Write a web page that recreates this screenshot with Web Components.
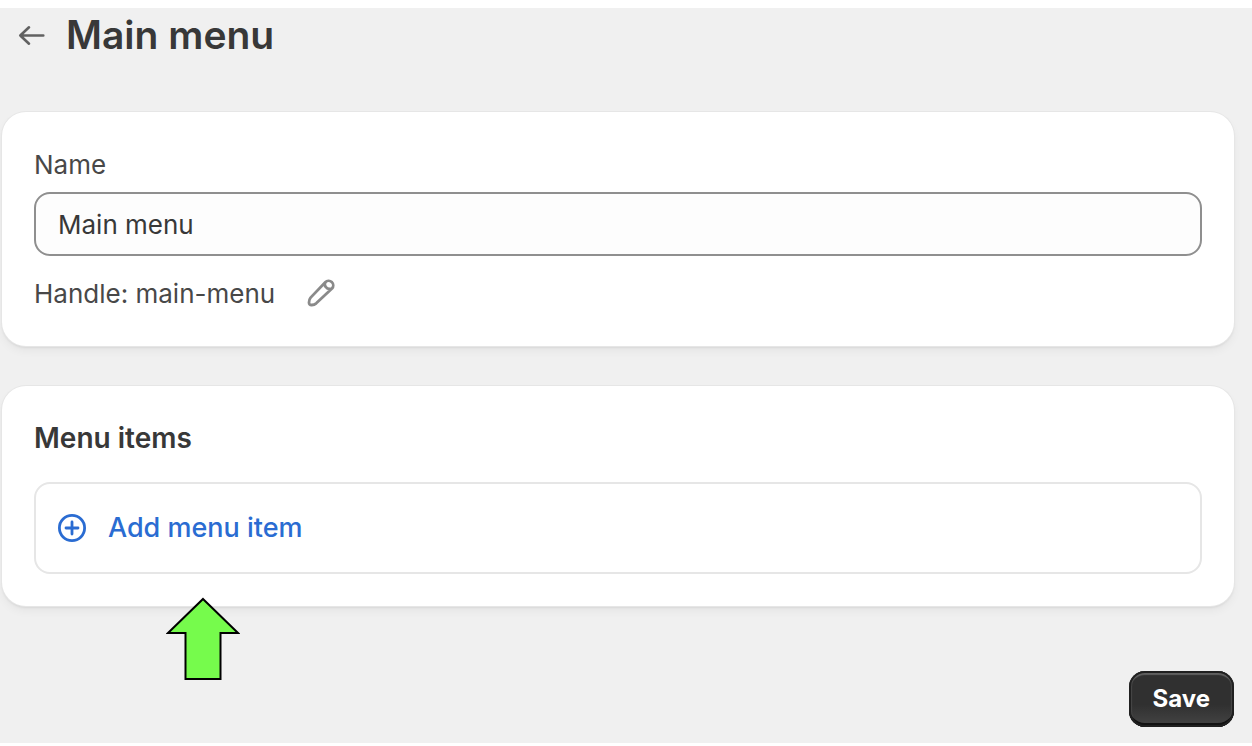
<!DOCTYPE html>
<html lang="en">
<head>
<meta charset="utf-8">
<title>Main menu</title>
<style>
  body { margin: 0; background: #fff; color: #303030; font: 26px/40px Inter, "Liberation Sans", sans-serif; }
</style>
</head>
<body>
<menu-page></menu-page>
<script>
const define = (name, html, delegatesFocus = false) => {
  const template = document.createElement('template');
  template.innerHTML = html;
  customElements.define(name, class extends HTMLElement {
    constructor() {
      super();
      this.attachShadow({ mode: 'open', delegatesFocus }).append(template.content.cloneNode(true));
    }
  });
};

define('page-header', `
  <style>
    :host { display: flex; align-items: center; gap: 18px; padding: 0 16px; }
    a { display: flex; color: #616161; }
    h1 { margin: 0; font-size: 39px; line-height: 54px; font-weight: 600; color: #383838; }
  </style>
  <a href="#" aria-label="Back">
    <svg width="30" height="30" viewBox="0 0 30 30" fill="none" stroke="currentColor" stroke-width="2.6" stroke-linecap="round" stroke-linejoin="round" aria-hidden="true">
      <path d="M25.300 15.500H2.300M11 7.300L2.300 15.500L11 23.700"/>
    </svg>
  </a>
  <h1><slot></slot></h1>`);

define('ui-card', `
  <style>
    :host { display: block; padding: 32px; border-radius: 24px; background: #fff;
      box-shadow: 0 0 0 1px #e6e6e6, 0 2px 2px #d8d8d8, 0 5px 10px #0000000c; }
  </style>
  <slot></slot>`);

define('name-field', `
  <style>
    :host { display: grid; gap: 6px; }
    label { line-height: 42px; color: #484848; }
    input { box-sizing: border-box; width: 100%; height: 64px; margin: 0; padding: 0 22px;
      border: 2px solid #8f8f8f; border-radius: 16px; background: #fdfdfd; color: #383838; font: inherit; outline: none; }
  </style>
  <label for="name">Name</label>
  <input id="name" type="text" value="Main menu">`, true);

define('menu-handle', `
  <style>
    :host { display: flex; align-items: center; gap: 30px; margin-top: 18px; color: #484848; }
    button { display: flex; margin: 0; padding: 0; border: 0; background: none; color: #8a8a8a; }
  </style>
  <span><slot></slot></span>
  <button type="button" aria-label="Edit handle">
    <svg width="32" height="32" viewBox="0 0 32 32" fill="none" stroke="currentColor" stroke-width="2.8" stroke-linecap="round" stroke-linejoin="round" aria-hidden="true">
      <path d="M20.300 5.300A4.300 4.300 0 0 1 27 11.500L11.200 26.300Q9.300 27.800 6.800 28Q4 28.200 4 25.500Q4 22.500 5.600 20.600ZM20.300 5.300Q19 8 20.800 10Q22.600 12.500 26 11.800" transform="translate(0 -1)"/>
    </svg>
  </button>`);

define('menu-items', `
  <style>
    :host { display: grid; gap: 24px; }
    h2 { margin: 0; font-size: 28px; line-height: 40px; font-weight: 600; color: #383838; }
    .list { border: 2px solid #e6e6e6; border-radius: 16px; }
    button { display: flex; align-items: center; gap: 20px; width: 100%; margin: 0; padding: 24px 20px;
      border: 0; background: none; color: #2a6cd2; font: inherit; font-size: 27px; font-weight: 500; text-align: left; }
  </style>
  <h2>Menu items</h2>
  <div class="list">
    <button type="button">
      <svg width="32" height="32" viewBox="0 0 32 32" fill="none" stroke="currentColor" stroke-width="2.8" stroke-linecap="round" aria-hidden="true">
        <circle cx="16" cy="16" r="12.6"/><path d="M16 10V22M10 16H22"/>
      </svg>
      <span>Add menu item</span>
    </button>
  </div>`);

define('save-button', `
  <style>
    :host { display: block; }
    button { display: block; height: 56px; margin: 0; padding: 0 24px; border: 0; border-radius: 16px;
      background: linear-gradient(#303030 60%, #454545); color: #fff; font: inherit; font-size: 24px; font-weight: 700;
      box-shadow: inset 0 0 0 2px #202020, inset 0 -4px 0 #121212, inset 0 4px 1px #606060, inset 3px 0 1px #484848, inset -3px 0 1px #484848; }
  </style>
  <button type="button"><slot></slot></button>`);

define('pointer-arrow', `
  <style>:host { display: block; } svg { display: block; }</style>
  <svg width="74" height="84" viewBox="0 0 74 84" aria-hidden="true">
    <path d="M37 2L72 36H54.500V82H19.500V36H2Z" fill="#76fb4c" stroke="#000" stroke-width="2"/>
  </svg>`);

define('menu-page', `
  <style>
    :host { display: block; margin-top: 8px; padding: 0 18px 16px 2px; background: #f0f0f0; }
    main { display: grid; gap: 40px; margin-top: 50px; }
    .items { position: relative; }
    pointer-arrow { position: absolute; left: 164px; top: 211px; }
    footer { display: flex; justify-content: flex-end; margin-top: 65px; }
  </style>
  <page-header>Main menu</page-header>
  <main>
    <ui-card>
      <name-field></name-field>
      <menu-handle>Handle: main-menu</menu-handle>
    </ui-card>
    <ui-card class="items">
      <menu-items></menu-items>
      <pointer-arrow></pointer-arrow>
    </ui-card>
  </main>
  <footer><save-button>Save</save-button></footer>`);
</script>
</body>
</html>
